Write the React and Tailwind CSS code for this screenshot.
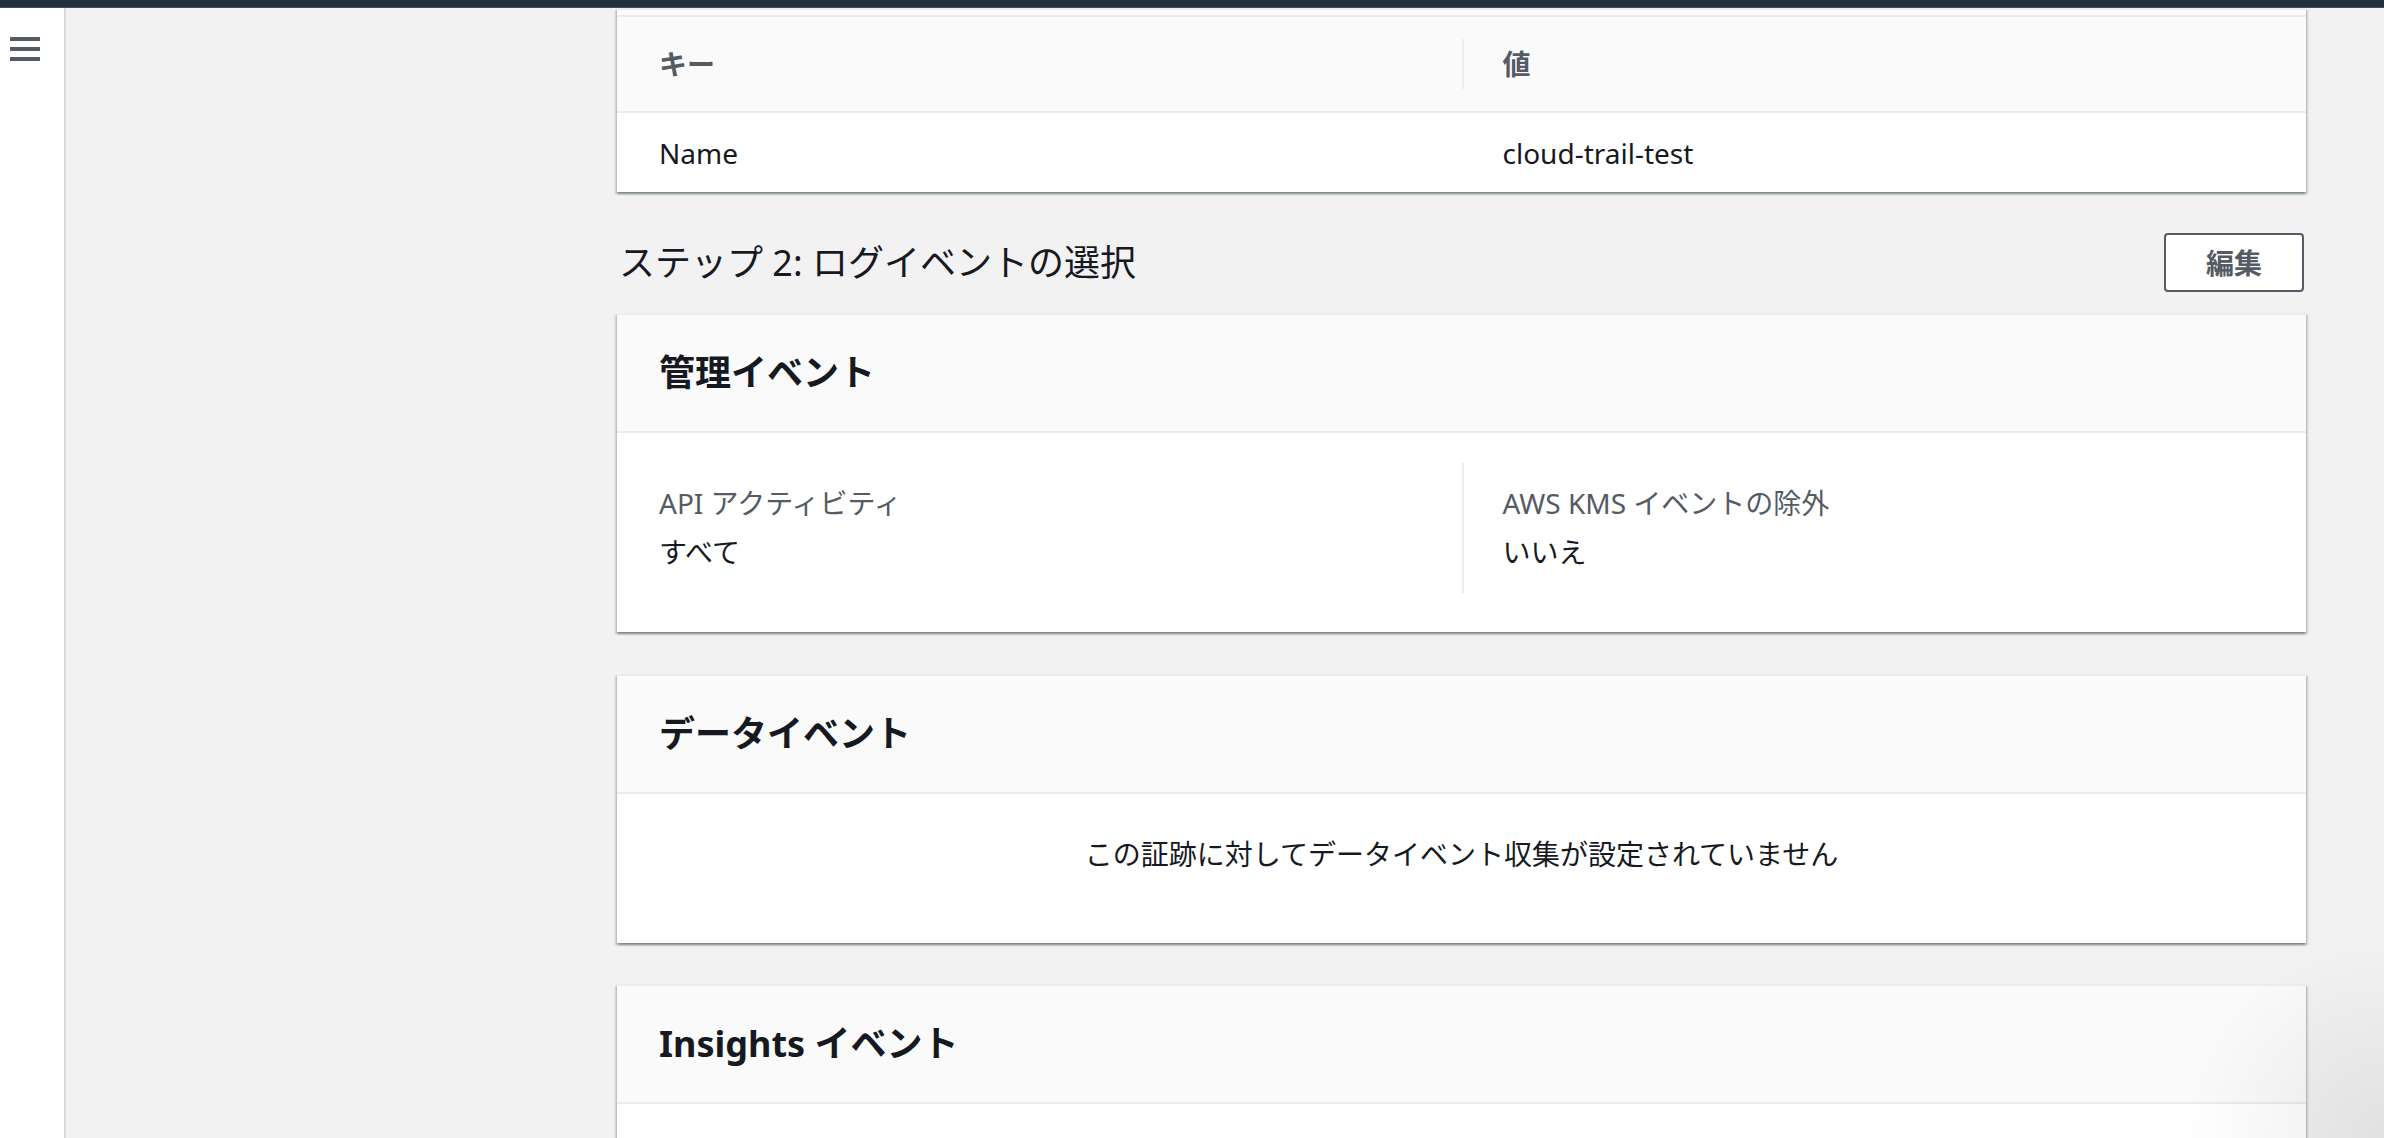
const Column = ({ label, value, divider }) => (
  <div className={`h-[130px] pt-[20px] ${divider ? "border-l-2 border-[#eaeded] pl-[39px]" : "pl-[42px]"}`}>
    <div className="h-[40px] leading-[40px] text-[28px] text-[#545b64]">{label}</div>
    <div className="mt-[9px] h-[40px] leading-[40px] text-[28px] text-[#16191f]">{value}</div>
  </div>
);

const CardHeader = ({ title }) => (
  <div className="h-[118px] flex items-center pl-[42px] bg-[#fafafa] border-b-2 border-[#eaeded]">
    <h2 className="text-[36px] font-bold text-[#16191f] leading-none">{title}</h2>
  </div>
);

const cardClass =
  "bg-white border-t-2 border-[#eaeded] shadow-[0_2px_2px_0_rgba(0,28,36,0.3),2px_2px_2px_0_rgba(0,28,36,0.15),-2px_2px_2px_0_rgba(0,28,36,0.15)]";

const App = () => {
  return (
    <div className="relative h-[1138px] overflow-hidden flex flex-col bg-[#f2f2f2] font-['Noto_Sans','Noto_Sans_CJK_JP',sans-serif]">
      {/* Top bar */}
      <div className="h-[8px] shrink-0 bg-[#232f3e] border-b border-[#414d5c]"></div>

      <div className="flex flex-1 min-h-0">
        {/* Side nav */}
        <aside className="w-[66px] shrink-0 bg-white border-r-2 border-[#d5dbdb] pt-[29px] pl-[10px]">
          <svg width="30" height="24" viewBox="0 0 30 24">
            <rect x="0" y="0" width="30" height="4" fill="#545b64" />
            <rect x="0" y="10" width="30" height="4" fill="#545b64" />
            <rect x="0" y="20" width="30" height="4" fill="#545b64" />
          </svg>
        </aside>

        <main className="flex-1 pl-[551px]">
          <div className="w-[1689px]">
            {/* Tags table (scrolled) */}
            <div className={`${cardClass} border-t-0`}>
              <div className="h-[5px] bg-[#fafafa]"></div>
              <div className="h-[98px] grid grid-cols-2 items-center bg-[#fafafa] border-t-2 border-b-2 border-[#eaeded]">
                <div className="pl-[42px] text-[28px] font-bold text-[#545b64]">キー</div>
                <div className="h-[50px] flex items-center border-l-2 border-[#eaeded] pl-[39px] text-[28px] font-bold text-[#545b64]">
                  値
                </div>
              </div>
              <div className="h-[79px] grid grid-cols-2 items-center text-[28px] text-[#16191f]">
                <div className="pl-[42px]">Name</div>
                <div className="pl-[41px]">cloud-trail-test</div>
              </div>
            </div>

            {/* Step 2 header */}
            <div className="mt-[41px] mb-[21px] h-[59px] flex items-center justify-between">
              <h1 className="pl-[2px] text-[36px] font-normal text-[#16191f] leading-none">
                ステップ 2: ログイベントの選択
              </h1>
              <button className="w-[140px] h-[59px] mr-[2px] bg-white border-2 border-[#545b64] rounded-[4px] text-[28px] font-bold text-[#545b64]">
                編集
              </button>
            </div>

            {/* Management events */}
            <div className={cardClass}>
              <CardHeader title="管理イベント" />
              <div className="pt-[30px] pb-[39px] grid grid-cols-2">
                <Column label="API アクティビティ" value="すべて" />
                <Column label="AWS KMS イベントの除外" value="いいえ" divider />
              </div>
            </div>

            {/* Data events */}
            <div className={`${cardClass} mt-[42px]`}>
              <CardHeader title="データイベント" />
              <div className="h-[149px] pt-[40px] text-center">
                <p className="h-[40px] leading-[40px] text-[28px] text-[#16191f]">
                  この証跡に対してデータイベント収集が設定されていません
                </p>
              </div>
            </div>

            {/* Insights events */}
            <div className={`${cardClass} mt-[41px]`}>
              <CardHeader title="Insights イベント" />
              <div className="h-[200px]"></div>
            </div>
          </div>
        </main>
      </div>

      {/* corner shading from the capture */}
      <div className="absolute right-0 bottom-0 w-[220px] h-[220px] pointer-events-none bg-[radial-gradient(circle_at_100%_100%,rgba(0,0,0,0.07),transparent_65%)]"></div>
    </div>
  );
};

export default App;
